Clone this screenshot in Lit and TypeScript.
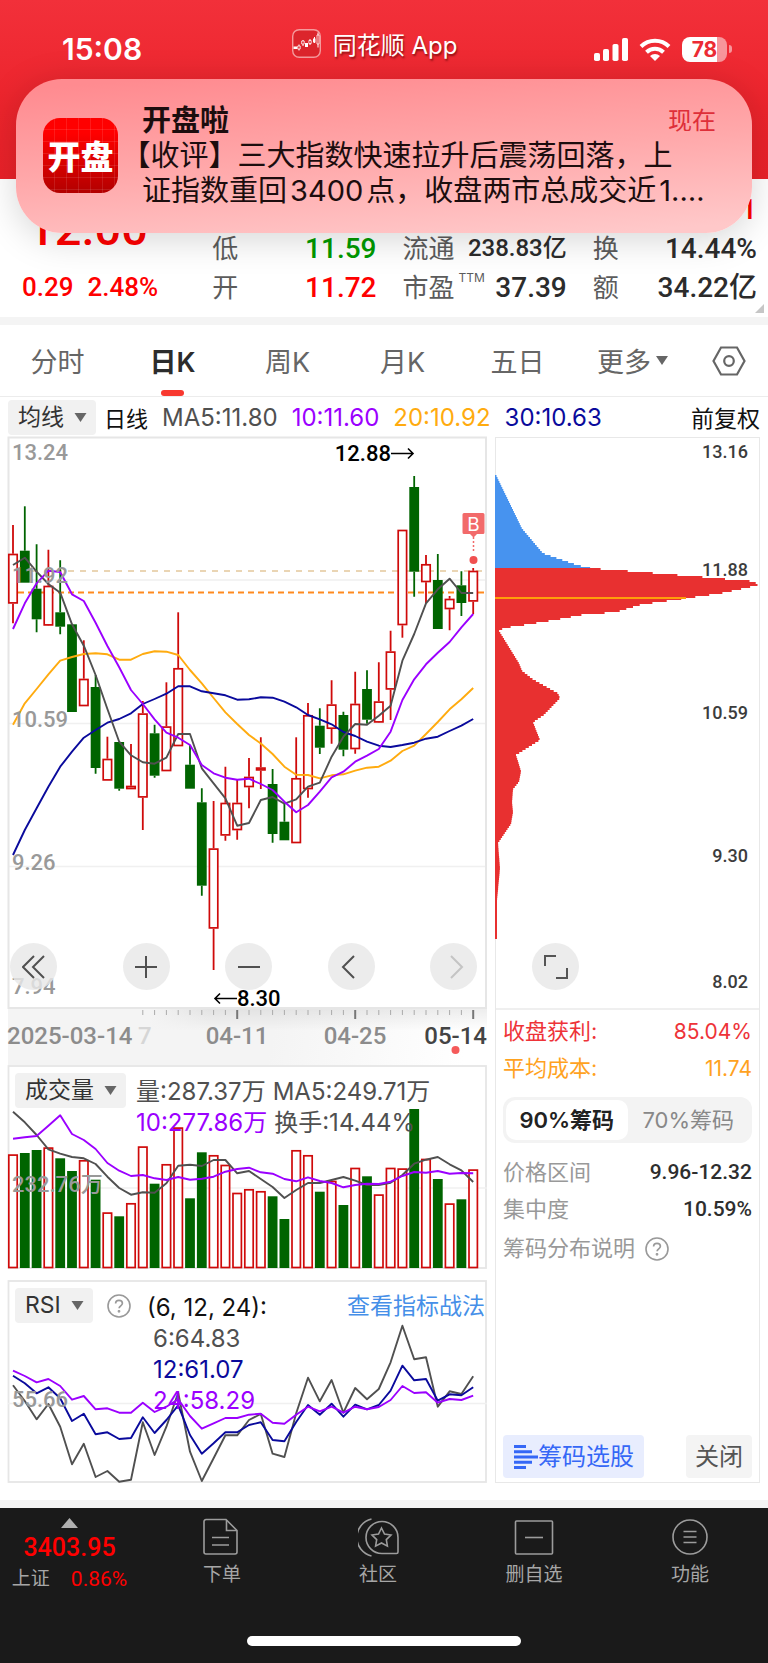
import { LitElement, html, svg, css } from "lit";
import { customElement } from "lit/decorators.js";

/* ---------- data, in the coordinate space of the chart canvases ---------- */

const X0 = 13;
const STEP = 11.8;
const xAt = (i: number) => +(X0 + i * STEP).toFixed(1);

// [rising, body top, body bottom, high, low]
type Candle = [number, number, number, number, number];
const candles: Candle[] = [
  [1, 553.7, 603.7, 525, 623.3], [0, 550.7, 582.7, 506.3, 582.7], [0, 588.7, 619.3, 544.3, 632.3],
  [1, 585.7, 625.7, 549.7, 626], [0, 612.3, 626.7, 560.3, 634.3], [0, 624.3, 712, 624.3, 712],
  [1, 678.7, 706.3, 640.3, 706.3], [0, 687, 768, 675, 773.7], [1, 758.7, 780.7, 736.7, 780.7],
  [0, 742, 788.7, 742, 790.7], [1, 785.7, 789.3, 744, 789.3], [1, 713.3, 797.7, 701, 830],
  [0, 733.3, 775.7, 724.7, 777.7], [1, 726.3, 771.3, 682.3, 771.3], [1, 668, 746.3, 612.3, 746.3],
  [0, 764.7, 788.7, 745, 788.7], [0, 802.3, 885.7, 788.3, 895.7], [1, 848.3, 928.7, 801, 970],
  [1, 802.7, 835.7, 766.7, 840.7], [1, 802.7, 830.3, 780, 839.7], [1, 776.7, 787.3, 758, 808.3],
  [1, 767.3, 770.7, 737.3, 789], [0, 784, 834, 769, 842.7], [0, 821.7, 840.3, 803.3, 840.3],
  [1, 778, 843.3, 737.3, 843.3], [1, 715, 789.3, 703, 797.7], [0, 725.7, 747.7, 708.3, 754],
  [1, 704.3, 729, 680.3, 743.7], [0, 715, 749.7, 711.7, 756.3], [1, 703.7, 749.3, 671.7, 753.7],
  [0, 689, 719.7, 670.3, 723.7], [1, 701.3, 722.7, 662.3, 723], [1, 651.3, 689.7, 630.7, 720],
  [1, 529.7, 625.3, 529.7, 637.7], [0, 487, 571.7, 476, 596.7], [1, 564, 582.3, 555, 603.3],
  [0, 580, 629, 554, 629], [1, 598.7, 609.3, 596, 630.3], [0, 585.3, 603, 571.3, 616],
  [1, 570.7, 601.7, 568, 614],
];

const ma5 = [565, 557.7, 571.7, 584, 592.7, 624.3, 645.7, 675, 709, 741.7, 755.3, 762.3, 763.7, 757.7, 734, 734, 768.3, 783.3, 798.3, 825.7, 823, 800, 797, 803.7, 799.3, 786.7, 782.7, 756.7, 736.7, 724, 724.7, 715.7, 705.7, 660.7, 634, 603.3, 589.3, 578.7, 593, 593];
const ma10 = [629, 603.3, 583.3, 570.7, 572, 594.3, 601, 622.7, 646, 667.3, 690, 704, 719.3, 732.7, 737.7, 745, 765, 773.3, 777.7, 779.7, 778.7, 784, 790, 801.7, 812.3, 805, 791.7, 777.3, 771.7, 761.7, 755.7, 749, 731.7, 700, 679.3, 664.3, 652.7, 642, 627.3, 614];
const ma20 = [724.7, 703.3, 689, 674.3, 660.7, 657, 654, 653.3, 654.3, 659.7, 659.7, 654, 651.3, 651.7, 655, 670, 683.3, 698, 712.3, 724, 735, 743.5, 754, 766.7, 774.7, 775, 778.3, 775.3, 774.3, 770.7, 767.7, 766.7, 760.7, 751, 745.7, 734, 722, 709.3, 699.3, 688];
const ma30 = [855, 830, 808.3, 786.7, 766.7, 751.7, 737.7, 730, 722.7, 719, 713.3, 704, 699, 693.7, 686.3, 686.3, 691.3, 693.3, 695.3, 699.7, 699.3, 697.3, 697.7, 701.7, 707.3, 715, 719.3, 724.3, 732, 736, 741.7, 745.7, 747, 745, 742.7, 738.7, 736.7, 731, 725.7, 719];

const third = (base: number, list: number[]) => list.map((v) => +(base + v / 3).toFixed(1));

const volTops = third(1060, [283, 279, 270, 262, 295, 333, 300, 359, 457, 469, 429, 259, 371, 312, 202, 415, 277, 285, 314, 398, 387, 393, 409, 477, 270, 285, 395, 362, 435, 323, 349, 403, 323, 325, 147, 296, 357, 430, 418, 328]);
const volUp = [1, 0, 0, 1, 0, 0, 1, 0, 1, 0, 1, 1, 0, 1, 1, 0, 0, 1, 1, 1, 1, 1, 0, 0, 1, 1, 0, 1, 0, 1, 0, 1, 1, 1, 0, 1, 0, 1, 0, 1];
const volMa5 = third(1060, [155, 187, 225, 268, 281, 291, 295, 312, 350, 384, 404, 397, 398, 370, 317, 314, 318, 300, 300, 340, 333, 357, 381, 414, 390, 369, 369, 360, 351, 362, 375, 375, 368, 345, 311, 299, 291, 313, 331, 366]);
const volMa10 = third(1060, [236, 232, 228, 197, 166, 222, 240, 267, 309, 332, 348, 345, 355, 360, 351, 359, 356, 350, 335, 327, 323, 337, 341, 357, 364, 352, 363, 369, 382, 375, 371, 372, 365, 348, 336, 338, 333, 341, 339, 340]);

const rsi6 = third(1270, [346, 393, 448, 402, 470, 583, 521, 621, 603, 635, 629, 457, 555, 470, 368, 545, 633, 565, 496, 496, 450, 432, 551, 561, 430, 323, 394, 330, 428, 354, 388, 357, 277, 167, 268, 262, 410, 364, 372, 319]);
const rsi12 = third(1270, [317, 340, 370, 352, 385, 453, 431, 493, 487, 507, 504, 442, 489, 450, 406, 495, 551, 520, 487, 487, 465, 457, 510, 514, 456, 405, 434, 401, 440, 404, 418, 405, 362, 287, 331, 327, 392, 373, 376, 352]);
const rsi24 = third(1270, [302, 318, 337, 327, 348, 389, 378, 418, 415, 428, 428, 398, 426, 410, 388, 438, 476, 460, 444, 444, 434, 431, 458, 461, 434, 410, 424, 410, 428, 410, 418, 411, 390, 348, 369, 367, 398, 387, 390, 377]);

// chip distribution outline: [price level y, width]
const chips: [number, number][] = [
  [475, 0], [528.6, 26], [553.4, 47], [565.4, 82], [568.4, 96], [570, 119], [572.2, 147], [574.5, 175],
  [576.7, 203], [579, 229], [581.2, 256], [584.6, 263], [587.3, 253], [593.3, 225], [598.2, 191],
  [600.4, 175], [604.6, 145], [612.1, 120], [614.7, 87], [619.6, 61], [626, 22], [627.9, 8],
  [630.9, 3], [663.3, 23], [670.8, 26], [679.4, 37], [693.4, 62], [698.2, 64], [714.8, 48],
  [722.3, 37], [740, 44], [755, 20], [771.2, 25], [781.8, 23], [789.3, 17], [802.5, 16],
  [812.2, 17], [823.9, 15], [843.1, 2], [868.3, 4], [900.3, 1], [938.6, 1],
];
const CHIP_SPLIT = 568;

function chipWidth(y: number): number {
  for (let i = 1; i < chips.length; i++) {
    const [y1, w1] = chips[i];
    const [y0, w0] = chips[i - 1];
    if (y <= y1) return w0 + ((w1 - w0) * (y - y0)) / (y1 - y0);
  }
  return 0;
}

function chipPath(from: number, to: number): string {
  let d = `M496 ${from}`;
  for (let y = from; y < to; y += 2) {
    d += `H${(497 + chipWidth(Math.min(y + 1, 938))).toFixed(1)}V${Math.min(y + 2, to)}`;
  }
  return d + "H496Z";
}

const line = (ys: number[], color: string) => svg`
  <polyline fill="none" stroke=${color} stroke-width="1.9" stroke-linejoin="round"
    points=${ys.map((y, i) => `${xAt(i)},${y}`).join(" ")}></polyline>`;

const UP = "#cf0a0a";
const DOWN = "#006400";
const GRAY = "#505050";
const PURPLE = "#9b00ff";
const ORANGE = "#ffab0f";
const NAVY = "#0a0a9c";

const base = css`
  :host {
    display: block;
    --ui: Inter, "Noto Sans CJK SC", sans-serif;
    --num: Roboto, "Noto Sans CJK SC", sans-serif;
    font-family: var(--ui);
  }
  * {
    box-sizing: border-box;
  }
  svg {
    display: block;
  }
  button, select {
    font: inherit;
    color: inherit;
    border: 0;
    margin: 0;
    padding: 0;
    background: none;
  }
  a {
    color: inherit;
    text-decoration: none;
  }
  .canvas {
    width: 100%;
    height: auto;
    overflow: visible;
  }
  .axis-text {
    font-family: Roboto, "Noto Sans CJK SC", sans-serif;
    font-size: 22px;
    font-weight: 500;
    fill: #999;
  }
  .picker {
    position: relative;
    display: inline-flex;
    align-items: center;
    background: #f1f1f1;
    border-radius: 4px;
    color: #333;
  }
  .picker select {
    appearance: none;
    height: 35px;
    padding: 0 32px 0 10px;
    font-size: 23px;
    line-height: 35px;
    cursor: pointer;
  }
  .picker svg {
    position: absolute;
    right: 9px;
    pointer-events: none;
  }
  .help {
    display: inline-flex;
    color: #999;
  }
`;

const picker = (name: string, value: string) => html`
  <label class="picker">
    <select aria-label=${name}><option>${value}</option></select>
    <svg width="13" height="9" viewBox="0 0 13 9"><path d="M.5 0h12L6.500 9z" fill="#666"/></svg>
  </label>`;

const helpIcon = html`
  <svg width="24" height="24" viewBox="0 0 24 24" fill="none" stroke="#999" stroke-width="1.6">
    <circle cx="12" cy="12" r="11"></circle>
    <path d="M8.600 9.600c0-2 1.500-3.300 3.400-3.300s3.400 1.200 3.400 3c0 2.400-3.300 2.700-3.300 5" stroke-width="1.700"></path>
    <circle cx="12" cy="17.300" r=".6"></circle>
  </svg>`;

@customElement("kline-chart")
export class KlineChart extends LitElement {
  static styles = [
    base,
    css`
      .plot {
        position: relative;
      }
      .tools {
        position: absolute;
        left: 0;
        right: 0;
        bottom: 19px;
        display: flex;
        justify-content: space-between;
        padding: 0 10px 0 2px;
      }
      .tool {
        width: 47px;
        height: 47px;
        border-radius: 50%;
        background: rgba(232, 232, 232, 0.82);
        display: grid;
        place-items: center;
        color: #505050;
      }
      .tool.first {
        margin-right: 10px;
      }
      .tool[disabled] {
        color: #c4c4c4;
      }
      .price {
        font-family: Roboto, sans-serif;
        font-size: 22px;
        font-weight: 500;
        fill: #000;
      }
      .flag {
        font-family: Inter, sans-serif;
        font-size: 19px;
        fill: #fff;
      }
      .dates {
        background: linear-gradient(100deg, #f4f4f4 55%, #fff 95%);
      }
      .days {
        font-size: 24px;
        fill: #8c8c8c;
      }
      .today {
        fill: #444;
      }
      .faint {
        fill: #d6d6d6;
      }
    `,
  ];

  private tool(name: string, d: string, extra = "", disabled = false) {
    return html`<button class="tool ${extra}" aria-label=${name} ?disabled=${disabled}>
      <svg width="24" height="24" viewBox="0 0 24 24" fill="none" stroke="currentColor" stroke-width="2"><path d=${d}></path></svg>
    </button>`;
  }

  render() {
    return html`
      <div class="plot">
        <svg class="canvas" viewBox="8 437 479 572">
          <g stroke="#f0f0f0" stroke-width="1.500">
            <path d="M8 580H487M8 723.500H487M8 866.500H487"></path>
          </g>
          <rect x="8.500" y="437.500" width="477.500" height="570.500" fill="none" stroke="#e6e6e6" stroke-width="2"></rect>
          <path d="M8 571H487" stroke="#e3c79c" stroke-width="1.300" stroke-dasharray="6 6"></path>
          <path d="M8 592.500H487" stroke="#ff8a1e" stroke-width="2" stroke-dasharray="6 4"></path>
          ${candles.map(([up, top, bottom, high, low], i) => {
            const x = xAt(i);
            const color = up ? UP : DOWN;
            return svg`
              <path d=${`M${x} ${high}V${top}M${x} ${bottom}V${low}`} stroke=${color} stroke-width="1.8"></path>
              <rect x=${x - (up ? 4.2 : 4.9)} y=${up ? top + 0.8 : top} width=${up ? 8.4 : 9.8}
                height=${Math.max(1.5, bottom - top - (up ? 1.6 : 0))}
                fill=${up ? "#fff" : color} stroke=${up ? color : "none"} stroke-width="1.7"></rect>`;
          })}
          ${line(ma20, ORANGE)} ${line(ma30, NAVY)} ${line(ma5, GRAY)} ${line(ma10, PURPLE)}
          <g class="axis-text">
            <text x="12" y="460">13.24</text>
            <text x="12" y="583">11.92</text>
            <text x="12" y="727">10.59</text>
            <text x="12" y="870">9.26</text>
            <text x="12" y="994">7.94</text>
          </g>
          <text class="price" x="391" y="461" text-anchor="end">12.88</text>
          <path d="M391 453.500H413M408 448.500l5 5-5 5" fill="none" stroke="#000" stroke-width="1.600"></path>
          <text class="price" x="237" y="1006">8.30</text>
          <path d="M237 998.500H215M220 993.500l-5 5 5 5" fill="none" stroke="#000" stroke-width="1.600"></path>
          <path d="M464 513h19a1.500 1.500 0 0 1 1.500 1.500v18a1.500 1.500 0 0 1-1.500 1.500h-6l-3.500 3.500-3.500-3.500h-6a1.500 1.500 0 0 1-1.500-1.500v-18a1.500 1.500 0 0 1 1.500-1.500z" fill="#f26a6a"></path>
          <text class="flag" x="473.500" y="531" text-anchor="middle">B</text>
          <path d="M473.500 537V553" stroke="#f26a6a" stroke-width="1.500" stroke-dasharray="2 2"></path>
          <circle cx="473.500" cy="560" r="4" fill="#f05050"></circle>
        </svg>
        <div class="tools">
          ${this.tool("最早", "M12 1L1 12l11 11M22 1L11 12l11 11", "first")}
          ${this.tool("放大", "M1 12h22M12 1v22")}
          ${this.tool("缩小", "M1 12h22")}
          ${this.tool("向左", "M15 1L4 12l11 11")}
          ${this.tool("向右", "M9 1l11 11L9 23", "", true)}
        </div>
      </div>
      <div class="dates">
        <svg class="canvas" viewBox="8 1009 479 56">
          <defs>
            <linearGradient id="tickFade" x1="0" y1="0" x2="0" y2="1">
              <stop offset="0" stop-color="#000" stop-opacity=".07"></stop>
              <stop offset="1" stop-color="#000" stop-opacity="0"></stop>
            </linearGradient>
            <linearGradient id="sideFade">
              <stop offset="0" stop-color="#f4f4f4"></stop>
              <stop offset="1" stop-color="#f4f4f4" stop-opacity="0"></stop>
            </linearGradient>
          </defs>
          <rect x="150" y="1009" width="337" height="22" fill="url(#tickFade)"></rect>
          <rect x="149" y="1009" width="60" height="24" fill="url(#sideFade)"></rect>
          ${candles.map((_, i) =>
            i < 11
              ? ""
              : i % 10 === 9
                ? svg`<path d=${`M${xAt(i)} 1010v9`} stroke="#777" stroke-width="2"></path>`
                : svg`<path d=${`M${xAt(i)} 1010v5`} stroke="#aaa" stroke-width="1"></path>`
          )}
          <g class="axis-text days">
            <text x="7" y="1044">2025-03-14</text>
            <text class="faint" x="138" y="1044">7</text>
            <text x="237" y="1044" text-anchor="middle">04-11</text>
            <text x="355" y="1044" text-anchor="middle">04-25</text>
            <text class="today" x="487" y="1044" text-anchor="end">05-14</text>
          </g>
          <circle cx="455.500" cy="1050" r="4" fill="#f55a5a"></circle>
        </svg>
      </div>
    `;
  }
}

const subPanel = css`
  .panel {
    position: relative;
  }
  .legend {
    position: absolute;
    left: 7px;
    right: 2px;
    top: 8px;
    display: flex;
    align-items: flex-start;
    font-size: 24px;
    line-height: 31px;
    color: #505050;
    white-space: nowrap;
  }
  .navy {
    color: #0a0a9c;
  }
  .purple {
    color: #9b00ff;
  }
`;

@customElement("volume-chart")
export class VolumeChart extends LitElement {
  static styles = [
    base,
    subPanel,
    css`
      .rows {
        padding: 3px 0 0 10px;
      }
      .pair {
        display: flex;
        gap: 7px;
      }
    `,
  ];

  render() {
    return html`
      <div class="panel">
        <svg class="canvas" viewBox="8 1065 479 204">
          <rect x="8.500" y="1066" width="477.500" height="202" fill="none" stroke="#e6e6e6" stroke-width="1.800"></rect>
          <path d="M8 1188H487" stroke="#f0f0f0" stroke-width="1.500"></path>
          ${volTops.map((top, i) =>
            volUp[i]
              ? svg`<rect x=${xAt(i) - 4.2} y=${top + 0.8} width="8.4" height=${1266.7 - top} fill="#fff" stroke=${UP} stroke-width="1.7"></rect>`
              : svg`<rect x=${xAt(i) - 4.9} y=${top} width="9.8" height=${1268 - top} fill=${DOWN}></rect>`
          )}
          ${line(volMa5, GRAY)} ${line(volMa10, PURPLE)}
          <text class="axis-text" x="12" y="1192">232.76万</text>
        </svg>
        <div class="legend">
          ${picker("副图指标", "成交量")}
          <div class="rows">
            <div class="pair"><span>量:287.37万</span><span>MA5:249.71万</span></div>
            <div class="pair"><span class="purple">10:277.86万</span><span>换手:14.44%</span></div>
          </div>
        </div>
      </div>
    `;
  }
}

@customElement("rsi-chart")
export class RsiChart extends LitElement {
  static styles = [
    base,
    subPanel,
    css`
      .help {
        margin: 6px 16px 0 14px;
      }
      .rows {
        display: grid;
        flex: 1;
        padding-top: 4px;
      }
      .params {
        color: #111;
      }
      .value {
        padding-left: 6px;
      }
      .guide {
        color: #468fe8;
        font-size: 23px;
        padding-top: 3px;
      }
    `,
  ];

  render() {
    return html`
      <div class="panel">
        <svg class="canvas" viewBox="8 1280 479 203">
          <rect x="8.500" y="1281" width="477.500" height="201" fill="none" stroke="#e6e6e6" stroke-width="1.800"></rect>
          <path d="M8 1403.500H487" stroke="#f0f0f0" stroke-width="1.500"></path>
          ${line(rsi6, GRAY)} ${line(rsi12, NAVY)} ${line(rsi24, PURPLE)}
          <text class="axis-text" x="12" y="1407">55.66</text>
        </svg>
        <div class="legend">
          ${picker("副图指标", "RSI")}
          <button class="help" aria-label="指标说明">${helpIcon}</button>
          <div class="rows">
            <span class="params">(6, 12, 24):</span>
            <span class="value">6:64.83</span>
            <span class="value navy">12:61.07</span>
            <span class="value purple">24:58.29</span>
          </div>
          <a class="guide" href="#guide">查看指标战法</a>
        </div>
      </div>
    `;
  }
}

@customElement("chip-panel")
export class ChipPanel extends LitElement {
  static styles = [
    base,
    css`
      :host {
        display: flex;
        flex-direction: column;
        border: 1px solid #e8e8e8;
        color: #999;
        font-size: 22px;
        line-height: 37px;
      }
      .plot {
        position: relative;
        border-bottom: 2px solid #efefef;
      }
      .scale {
        font-family: Roboto, sans-serif;
        font-size: 18px;
        font-weight: 500;
        fill: #3c3c3c;
      }
      .expand {
        position: absolute;
        left: 36px;
        bottom: 18px;
        width: 47px;
        height: 47px;
        border-radius: 50%;
        background: #ececec;
        display: grid;
        place-items: center;
      }
      .info {
        flex: 1;
        display: flex;
        flex-direction: column;
        padding: 3px 7px 4px;
      }
      .row {
        display: flex;
        justify-content: space-between;
        align-items: center;
        white-space: nowrap;
      }
      .profit {
        color: #ee3338;
      }
      .cost {
        color: #ffa21f;
      }
      .amount {
        font-size: 21px;
      }
      .strong {
        color: #2e2e2e;
        font-family: var(--num);
        font-weight: 500;
      }
      .segment {
        display: grid;
        grid-template-columns: 1fr 1fr;
        background: #f3f3f3;
        border-radius: 12px;
        padding: 3px;
        margin: 10px 0 11px;
        color: #888;
      }
      .segment button {
        height: 40px;
        border-radius: 10px;
        white-space: nowrap;
      }
      .segment .on {
        background: #fff;
        color: #222;
        font-weight: 600;
      }
      .note {
        gap: 10px;
        justify-content: flex-start;
        padding-top: 2px;
      }
      .actions {
        display: flex;
        justify-content: space-between;
        margin-top: auto;
      }
      .actions button {
        height: 43px;
        border-radius: 4px;
        font-size: 24px;
        display: flex;
        align-items: center;
        white-space: nowrap;
      }
      .pick {
        background: #e8edfe;
        color: #3567f6;
        padding: 0 10px;
      }
      .close {
        background: #f4f4f4;
        color: #555;
        padding: 0 9px;
      }
    `,
  ];

  render() {
    return html`
      <div class="plot">
        <svg class="canvas" viewBox="497 438 263 570">
          <path d=${chipPath(475, CHIP_SPLIT)} fill="#4793ef"></path>
          <path d=${chipPath(CHIP_SPLIT, 939)} fill="#e83030"></path>
          <path d="M496 598H687" stroke="#ff9d0a" stroke-width="2"></path>
          <g class="scale" text-anchor="end">
            <text x="749" y="458">13.16</text>
            <text x="749" y="576">11.88</text>
            <text x="749" y="719">10.59</text>
            <text x="749" y="862">9.30</text>
            <text x="749" y="988">8.02</text>
          </g>
        </svg>
        <button class="expand" aria-label="展开">
          <svg width="26" height="24" viewBox="0 0 26 24" fill="none" stroke="#555" stroke-width="2"><path d="M2 11V1h11M24 13v10H13"></path></svg>
        </button>
      </div>
      <div class="info">
        <div class="row profit"><span>收盘获利:</span><span class="amount">85.04%</span></div>
        <div class="row cost"><span>平均成本:</span><span class="amount">11.74</span></div>
        <div class="segment">
          <button class="on" aria-pressed="true">90%筹码</button>
          <button aria-pressed="false">70%筹码</button>
        </div>
        <div class="row"><span>价格区间</span><span class="amount strong">9.96-12.32</span></div>
        <div class="row"><span>集中度</span><span class="amount strong">10.59%</span></div>
        <div class="row note"><span>筹码分布说明</span><button class="help" aria-label="筹码分布说明">${helpIcon}</button></div>
        <div class="actions">
          <button class="pick">
            <svg width="25" height="24" viewBox="0 0 25 24" stroke="currentColor" stroke-width="3"><path d="M1 1.500h12M1 6.800h18M1 12h24M1 17.200h18M1 22.500h12"></path></svg>筹码选股
          </button>
          <button class="close">关闭</button>
        </div>
      </div>
    `;
  }
}

const footIcons = {
  order: svg`<path d="M4 1.500h20l11 11V34a2 2 0 0 1-2 2H4a2 2 0 0 1-2-2V3.500a2 2 0 0 1 2-2z"/><path d="M24.500 2v10.500H35M10 19.500h17M10 27h17"/>`,
  social: svg`<path d="M24 3.500a16 16 0 0 0 0 32h14.500a1.500 1.500 0 0 0 1.500-1.500V19.500a16 16 0 0 0-16-16z"/><path d="M13.500 1a19 19 0 0 0 0 37"/><path d="M23.500 10l3 6 6.500 1-4.700 4.600 1.100 6.500-5.900-3.100-5.900 3.100 1.100-6.500L14 17l6.500-1z"/>`,
  remove: svg`<rect x="1.500" y="3" width="37" height="33" rx="1"/><path d="M11 19.500h18"/>`,
  menu: svg`<circle cx="20" cy="19" r="17"/><path d="M13.500 13.500h13M13.500 19h13M13.500 24.500h13"/>`,
};

@customElement("app-root")
export class AppRoot extends LitElement {
  static styles = [
    base,
    css`
      :host {
        background: #fff;
      }
      .top {
        position: relative;
      }
      .banner {
        height: 179px;
        background: linear-gradient(#f2303a, #ec242c 60%, #ea2229);
        color: #fff;
      }
      .status {
        display: grid;
        grid-template-columns: 1fr auto 1fr;
        align-items: center;
        padding: 26px 36px 0 62px;
        height: 72px;
      }
      .clock {
        font-size: 30px;
        font-weight: 600;
      }
      .app {
        display: flex;
        align-items: center;
        gap: 12px;
        font-size: 24px;
        margin-right: 45px;
        padding-bottom: 11px;
        text-shadow: 1px 2px 2px rgba(80, 0, 0, 0.6);
      }
      .signals {
        display: flex;
        justify-content: flex-end;
        align-items: center;
        gap: 11px;
      }
      .battery {
        display: flex;
        align-items: center;
        gap: 2px;
      }
      .charge {
        width: 45px;
        height: 25px;
        border-radius: 8px;
        background: linear-gradient(90deg, #fff 78%, #f7969b 78%);
        color: #ec2b34;
        font-size: 21px;
        font-weight: 700;
        line-height: 25px;
        text-align: center;
      }
      .nub {
        width: 3px;
        height: 8px;
        border-radius: 0 3px 3px 0;
        background: #f7969b;
      }
      .notice {
        position: absolute;
        left: 16px;
        right: 16px;
        top: 79px;
        height: 154px;
        border-radius: 46px;
        padding: 24px 36px 26px 27px;
        display: flex;
        align-items: center;
        gap: 24px;
        background: linear-gradient(176deg, #ff8b90 5%, #ffa8aa 50%, #ffc8c9 95%);
        box-shadow: 0 6px 36px rgba(0, 0, 0, 0.17);
        color: #1c0d0e;
      }
      .logo {
        flex: none;
        width: 75px;
        height: 75px;
        border-radius: 17px;
        display: grid;
        place-items: center;
        background:
          repeating-linear-gradient(90deg, transparent 0 11px, rgba(255, 255, 255, 0.1) 11px 12px),
          repeating-linear-gradient(transparent 0 11px, rgba(255, 255, 255, 0.1) 11px 12px),
          linear-gradient(#ff0000 20%, #b20000);
        color: #fff;
        font-size: 33px;
        font-weight: 900;
      }
      .message {
        flex: 1;
        min-width: 0;
        font-size: 29px;
        line-height: 35px;
        white-space: nowrap;
      }
      .head {
        display: flex;
        justify-content: space-between;
      }
      .title {
        font-weight: 600;
      }
      .when {
        font-size: 24px;
        color: #de2f39;
      }
      .open {
        font-feature-settings: "halt";
        margin-left: -6px;
      }
      .latin {
        margin: 0 3px;
      }
      .quote {
        display: grid;
        grid-template-columns: repeat(4, 1fr);
        column-gap: 26px;
        grid-auto-rows: 39px;
        padding: 11px 11px 10px 22px;
        height: 138px;
        font-size: 26px;
        line-height: 39px;
        color: #5c5c5c;
        white-space: nowrap;
      }
      .price {
        grid-row: 1 / 3;
        font: 500 47px/78px var(--num);
        padding-left: 6px;
        color: #f00;
      }
      .delta {
        display: flex;
        gap: 14px;
        font-family: var(--num);
        font-size: 26px;
        font-weight: 500;
        color: #f00;
      }
      .cell {
        display: flex;
        justify-content: space-between;
      }
      .blank {
        grid-column: 2 / 4;
      }
      .val {
        font-family: var(--num);
        font-size: 28px;
        font-weight: 500;
        color: #2c2c2c;
        margin-left: auto;
      }
      .val.small {
        font-size: 24px;
      }
      .val.red {
        color: #f00;
      }
      .val.green {
        color: #009a00;
      }
      .ttm {
        font-size: 12px;
        line-height: 20px;
        padding-left: 4px;
      }
      .corner {
        position: absolute;
        right: 4px;
        bottom: 4px;
      }
      .tabs {
        display: grid;
        grid-template-columns: repeat(6, 115fr) 78fr;
        height: 80px;
        border-top: 8px solid #f4f4f4;
        border-bottom: 1px solid #ececec;
        font-size: 27px;
        color: #666;
      }
      .tab {
        position: relative;
        display: flex;
        align-items: center;
        justify-content: center;
        gap: 5px;
      }
      .tab.on {
        color: #2c2c2c;
        font-weight: 600;
      }
      .tab.on::after {
        content: "";
        position: absolute;
        bottom: 0;
        width: 23px;
        height: 6px;
        border-radius: 3px;
        background: #f8382f;
      }
      .averages {
        display: flex;
        align-items: center;
        gap: 14px;
        height: 40px;
        padding: 0 8px;
        font-size: 24px;
        color: #505050;
        white-space: nowrap;
      }
      .period {
        color: #111;
        margin-left: -6px;
        font-size: 22px;
      }
      .purple {
        color: #9b00ff;
      }
      .orange {
        color: #ffab0f;
      }
      .navy {
        color: #0a0a9c;
      }
      .adjust {
        color: #111;
        margin-left: auto;
        font-size: 23px;
      }
      .charts {
        display: grid;
        grid-template-columns: 479fr 265fr;
        column-gap: 8px;
        padding: 0 8px 17px;
      }
      .stack {
        display: flex;
        flex-direction: column;
      }
      .stack rsi-chart {
        margin-top: 11px;
      }
      .foot {
        border-top: 8px solid #f4f4f4;
        background: #1a1a1a;
        color: #a6a6a6;
        font-size: 19px;
        line-height: 24px;
        padding-bottom: 17px;
      }
      .bar {
        display: grid;
        grid-template-columns: 144fr repeat(4, 156fr);
        height: 128px;
        padding-top: 10px;
      }
      .index {
        display: flex;
        flex-direction: column;
        align-items: center;
        font-family: var(--num);
        padding-right: 5px;
      }
      .points {
        font-size: 25px;
        font-weight: 500;
        line-height: 39px;
        color: #f00;
      }
      .change {
        display: flex;
        gap: 21px;
      }
      .percent {
        color: #f00;
        font-size: 21px;
      }
      .item {
        display: flex;
        flex-direction: column;
        align-items: center;
        gap: 6px;
      }
      .home {
        width: 274px;
        height: 10px;
        border-radius: 5px;
        background: #fff;
        margin: 0 auto;
      }
    `,
  ];

  private item(icon: unknown, name: string) {
    return html`<button class="item">
      <svg width="41" height="39" viewBox="0 0 41 39" fill="none" stroke="#9c9c9c" stroke-width="1.600">${icon}</svg>
      ${name}
    </button>`;
  }

  render() {
    return html`
      <header class="top">
        <div class="banner">
          <div class="status">
            <span class="clock">15:08</span>
            <span class="app">
              <svg width="29" height="29" viewBox="0 0 29 29">
                <rect x=".7" y=".7" width="27.600" height="27.600" rx="6.500" fill="#dc252c" stroke="#f59a9c" stroke-width="1.400"></rect>
                <path d="M7 15.500v6M11 11v6M18 10v6M22.500 8v6M26 3.500v15" stroke="#fff" stroke-width="1"></path>
                <path d="M1.500 17.500h3.500v2.500H1.500zM13 14h3v4h-3zM21 9.500h2.500v4H21z" fill="#fff"></path>
                <path d="M5.700 17h2.500v3H5.700zM9.700 12h2.500v3H9.700zM16.900 11.500h2.300v3h-2.300zM25 6h2v9h-2z" fill="#dc252c" stroke="#fff" stroke-width=".8"></path>
              </svg>
              同花顺 App
            </span>
            <span class="signals">
              <svg width="34" height="23" viewBox="0 0 34 23" fill="#fff">
                <rect y="15" width="6" height="8" rx="1.800"></rect><rect x="9" y="11" width="6" height="12" rx="1.800"></rect>
                <rect x="18.500" y="6" width="6" height="17" rx="1.800"></rect><rect x="28" width="6" height="23" rx="1.800"></rect>
              </svg>
              <svg width="32" height="23" viewBox="0 0 32 23" fill="none" stroke="#fff" stroke-width="4">
                <path d="M2 8.500a20 20 0 0 1 28 0M7.500 14.200a12.200 12.200 0 0 1 17 0"></path>
                <path d="M16 23l-5-5a7.200 7.200 0 0 1 10 0z" fill="#fff" stroke="none"></path>
              </svg>
              <span class="battery"><span class="charge">78</span><span class="nub"></span></span>
            </span>
          </div>
        </div>
        <div class="quote">
          <div class="price">12.00</div>
          <div class="blank"></div>
          <div class="cell"><span class="val red">1</span></div>
          <div class="cell">低<span class="val green">11.59</span></div>
          <div class="cell">流通<span class="val small">238.83亿</span></div>
          <div class="cell">换<span class="val">14.44%</span></div>
          <div class="delta"><span>0.29</span><span>2.48%</span></div>
          <div class="cell">开<span class="val red">11.72</span></div>
          <div class="cell">市盈<span class="ttm">TTM</span><span class="val">37.39</span></div>
          <div class="cell">额<span class="val">34.22亿</span></div>
        </div>
        <svg class="corner" width="9" height="9" viewBox="0 0 9 9"><path d="M9 0v9H0z" fill="#c6c6c6"></path></svg>
        <section class="notice">
          <div class="logo">开盘</div>
          <div class="message">
            <div class="head"><span class="title">开盘啦</span><span class="when">现在</span></div>
            <div><span class="open">【</span>收评】三大指数快速拉升后震荡回落，上</div>
            <div>证指数重回<span class="latin">3400</span>点，收盘两市总成交近<span class="latin">1.…</span></div>
          </div>
        </section>
      </header>

      <nav class="tabs">
        <button class="tab">分时</button>
        <button class="tab on">日K</button>
        <button class="tab">周K</button>
        <button class="tab">月K</button>
        <button class="tab">五日</button>
        <button class="tab">更多<svg width="12" height="10" viewBox="0 0 12 10"><path d="M0 0h12L6 9z" fill="#666"></path></svg></button>
        <button class="tab" aria-label="设置">
          <svg width="34" height="30" viewBox="0 0 34 30" fill="none" stroke="#666" stroke-width="2.200">
            <path d="M9 1.500h16L32.500 15 25 28.500H9L1.500 15z"></path><circle cx="17" cy="15" r="4.800"></circle>
          </svg>
        </button>
      </nav>

      <main>
        <div class="averages">
          ${picker("主图指标", "均线")}
          <span class="period">日线</span>
          <span>MA5:11.80</span>
          <span class="purple">10:11.60</span>
          <span class="orange">20:10.92</span>
          <span class="navy">30:10.63</span>
          <span class="adjust">前复权</span>
        </div>
        <div class="charts">
          <div class="stack">
            <kline-chart></kline-chart>
            <volume-chart></volume-chart>
            <rsi-chart></rsi-chart>
          </div>
          <chip-panel></chip-panel>
        </div>
      </main>

      <footer class="foot">
        <div class="bar">
          <div class="index">
            <svg width="17" height="10" viewBox="0 0 17 10"><path d="M8.500 0L17 10H0z" fill="#b0b0b0"></path></svg>
            <span class="points">3403.95</span>
            <span class="change">上证<span class="percent">0.86%</span></span>
          </div>
          ${this.item(footIcons.order, "下单")}
          ${this.item(footIcons.social, "社区")}
          ${this.item(footIcons.remove, "删自选")}
          ${this.item(footIcons.menu, "功能")}
        </div>
        <div class="home"></div>
      </footer>
    `;
  }
}
